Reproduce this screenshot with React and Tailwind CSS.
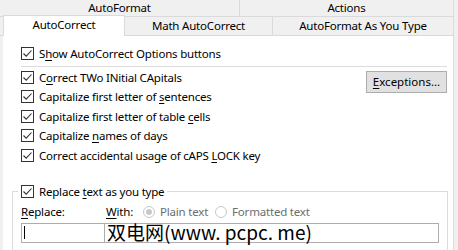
import React from "react";

const font = { fontFamily: '"Noto Sans", "Open Sans", sans-serif' };

function Check() {
  return (
    <span className="w-[13px] h-[13px] border border-[#333333] bg-white flex items-center justify-center shrink-0">
      <svg width="11" height="11" viewBox="0 0 11 11">
        <path d="M1.5 5.5 L4.2 8.2 L9.5 2.5" fill="none" stroke="#333333" strokeWidth="1.1" />
      </svg>
    </span>
  );
}

function Row({ children }) {
  return (
    <div className="flex items-center gap-[5px] h-[19.5px]">
      <Check />
      <span className="whitespace-nowrap">{children}</span>
    </div>
  );
}

function Radio({ on }) {
  return (
    <span className="w-[12px] h-[12px] rounded-full border border-[#c8c8c8] bg-white flex items-center justify-center shrink-0">
      {on && <span className="w-[6px] h-[6px] rounded-full bg-[#c8c8c8]" />}
    </span>
  );
}

export default function App() {
  return (
    <div
      className="w-[458px] h-[250px] bg-[#f0f0f0] overflow-hidden flex text-[11.5px] tracking-[-0.2px] text-black leading-none"
      style={font}
    >
      <div className="w-[454px] h-full flex flex-col border-r border-[#dadada]">
        {/* top tab row */}
        <div className="flex h-[17px] shrink-0 border-b border-[#dadada]">
          <div className="w-[240px] border-r border-[#dadada] flex items-center justify-center">AutoFormat</div>
          <div className="flex-1 flex items-center justify-center">Actions</div>
        </div>
        {/* second tab row */}
        <div className="flex h-[19px] shrink-0 items-end">
          <div className="w-[3px] h-full border-b border-[#dadada]" />
          <div className="relative w-[122px] h-[21px] -mt-[2px] bg-white border-x border-t border-[#dadada] flex items-center justify-center pb-[2px] self-start">
            AutoCorrect
          </div>
          <div className="w-[148px] h-full border-r border-b border-[#dadada] flex items-center justify-center">
            Math AutoCorrect
          </div>
          <div className="w-[180px] h-full border-b border-[#dadada] flex items-center justify-center">
            AutoFormat As You Type
          </div>
        </div>
        {/* panel */}
        <div className="ml-[3px] flex-1 bg-white pt-[8px]">
          <div className="pl-[18px]">
            <Row>
              S<u className="underline-offset-2">h</u>ow AutoCorrect Options buttons
            </Row>
          </div>
          <div className="mt-[2px] ml-[18px] w-[426px] h-px bg-[#dcdcdc]" />
          <div className="flex justify-between pl-[18px] pr-[6px] mt-[1px]">
            <div className="flex flex-col">
              <Row>
                C<u className="underline-offset-2">o</u>rrect TWo INitial CApitals
              </Row>
              <Row>
                Capitalize first letter of <u className="underline-offset-2">s</u>entences
              </Row>
              <Row>
                Capitalize first letter of table <u className="underline-offset-2">c</u>ells
              </Row>
              <Row>
                Capitalize <u className="underline-offset-2">n</u>ames of days
              </Row>
              <Row>
                Correct accidental usage of cAPS <u className="underline-offset-2">L</u>OCK key
              </Row>
            </div>
            <button className="mt-[3px] w-[81px] h-[22px] bg-[#e1e1e1] border border-[#adadad] flex items-center justify-center tracking-normal">
              <span>
                <u className="underline-offset-2">E</u>xceptions...
              </span>
            </button>
          </div>
          <fieldset className="mt-[17px] ml-[9px] w-[436px] h-[80px] border border-[#dcdcdc]">
            <legend className="ml-[5px] px-[3px]">
              <Row>
                Replace <u className="underline-offset-2">t</u>ext as you type
              </Row>
            </legend>
            <div className="pl-[8px]">
              <div className="flex items-center h-[15px] mt-[3px]">
                <span className="w-[84px]">
                  <u className="underline-offset-2">R</u>eplace:
                </span>
                <span className="pl-[1px] w-[38px]">
                  <u className="underline-offset-2">W</u>ith:
                </span>
                <Radio on />
                <span className="ml-[5px] text-[#6d6d6d]">Plain text</span>
                <span className="ml-[7px]">
                  <Radio />
                </span>
                <span className="ml-[5px] text-[#6d6d6d]">Formatted text</span>
              </div>
              <div className="flex mt-[3px]">
                <div className="w-[84px] h-[20px] border border-[#adadad] flex items-center pl-[2px]">
                  <span className="w-px h-[13px] bg-black" />
                </div>
                <div className="relative -ml-px w-[335px] h-[20px] border border-[#adadad]">
                  <span
                    className="absolute left-[2px] -top-[2px] text-[19px] leading-[20px] tracking-normal whitespace-nowrap text-black"
                    style={{ fontFamily: '"Noto Sans CJK SC", sans-serif' }}
                  >
                    双电网(www. pcpc. me)
                  </span>
                </div>
              </div>
            </div>
          </fieldset>
        </div>
      </div>
    </div>
  );
}
